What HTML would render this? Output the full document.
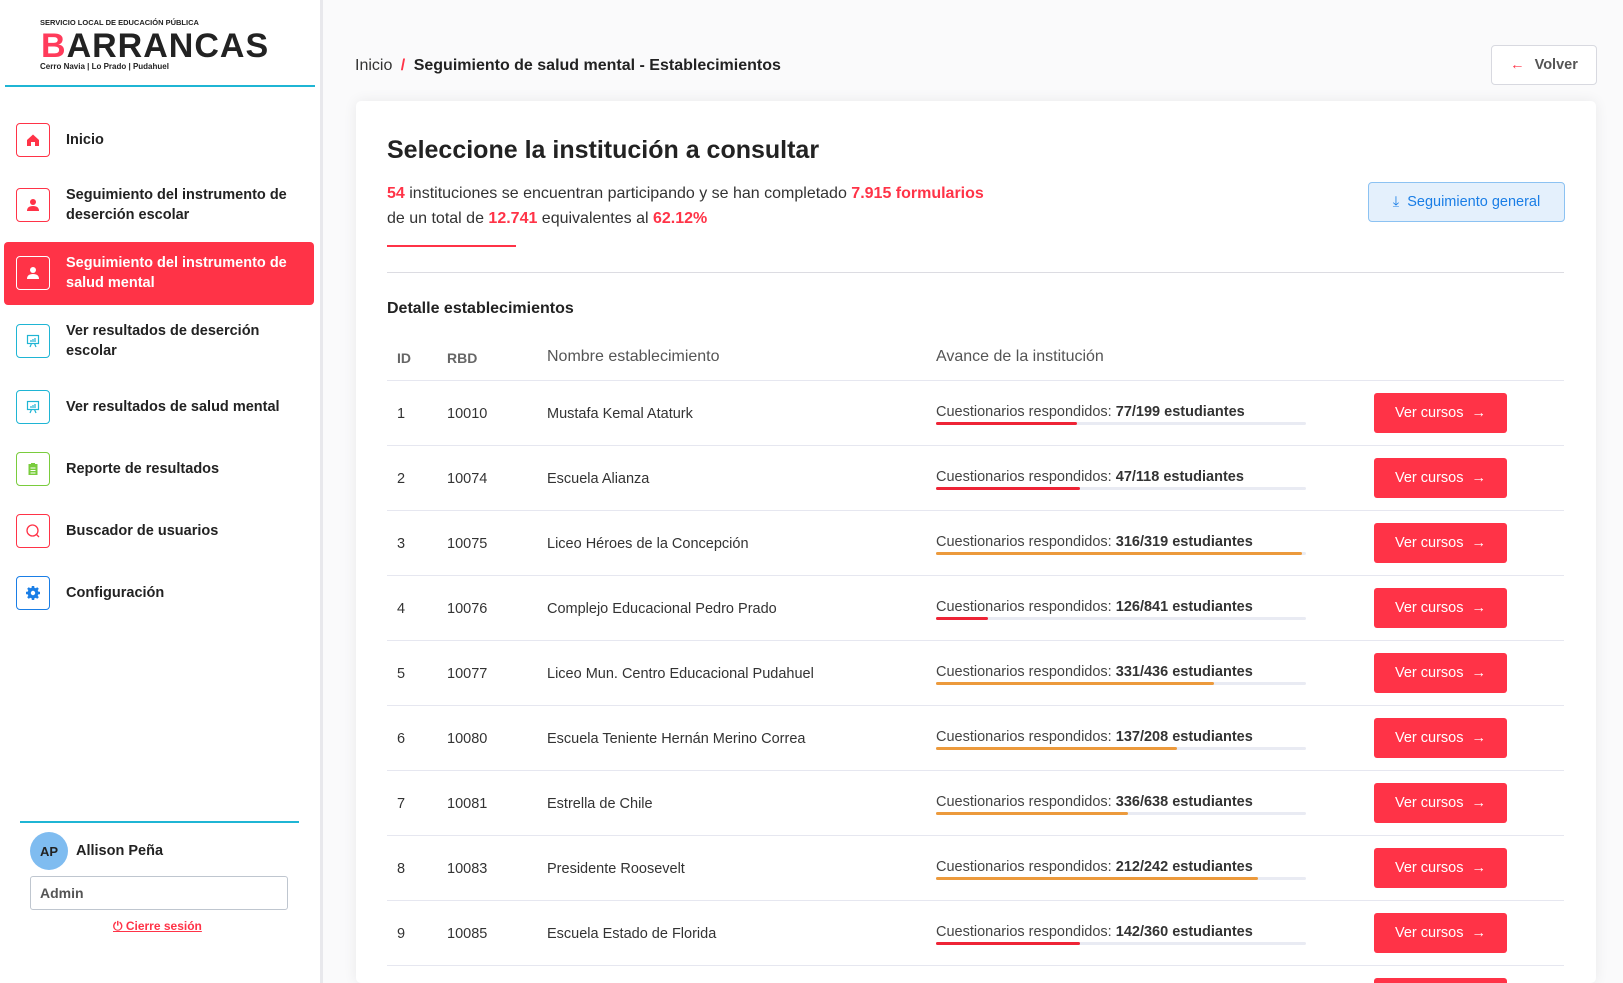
<!DOCTYPE html>
<html><head><meta charset="utf-8"><style>
*{box-sizing:border-box;margin:0;padding:0}
html,body{width:1623px;height:983px;overflow:hidden}
body{background:#fafafb;font-family:"Liberation Sans",sans-serif;color:#222;position:relative}
#w{position:absolute;left:0;top:0;width:1623px;height:983px;overflow:hidden}
.sb{position:absolute;left:0;top:0;width:323px;height:983px;background:#fff;border-right:3px solid #e8e8ec}
.abs{position:absolute}
.mi{position:absolute;left:16px;width:34px;height:34px;border:1.5px solid;border-radius:4px;display:flex;align-items:center;justify-content:center}
.mt{position:absolute;left:66px;font-size:14.5px;font-weight:bold;line-height:20px;color:#222}
.card{position:absolute;left:356px;top:101px;width:1240px;height:882px;background:#fff;border-radius:5px;box-shadow:0 0 14px rgba(0,0,0,.07)}
.r{color:#ff3347;font-weight:bold}
.row{position:absolute;left:387px;width:1177px;height:65px;border-top:1px solid #e6e7f0;font-size:14.5px;color:#333}
.row span{position:absolute;top:25px}
.pt{position:absolute;left:549px;top:23px;font-size:14.5px;color:#444;white-space:nowrap}
.pt b{color:#333}
.bar{position:absolute;left:549px;top:41px;width:370px;height:3px;background:#e9ebf3;border-radius:2px}
.bar i{display:block;height:3px;border-radius:2px}
.btn{position:absolute;left:987px;top:12px;width:133px;height:40px;background:#ff3347;border-radius:3px;color:#fff;font-size:14.5px;display:flex;align-items:center;justify-content:center}
</style></head><body><div id="w">
<div class="sb">
 <div class="abs" style="left:40px;top:18px;font-size:7.5px;font-weight:bold;color:#222">SERVICIO LOCAL DE EDUCACIÓN PÚBLICA</div>
 <div class="abs" style="left:41px;top:27px;font-size:34px;font-weight:900;letter-spacing:1px;color:#222;line-height:38px"><span style="color:#ff3b5b">B</span>ARRANCAS</div>
 <div class="abs" style="left:40px;top:62px;font-size:8px;font-weight:bold;color:#222">Cerro Navia | Lo Prado | Pudahuel</div>
 <div class="abs" style="left:5px;top:85px;width:310px;height:1.5px;background:#1fb5d4"></div>

 <div class="mi" style="top:123px;border-color:#ff3347"><svg width="14" height="14" viewBox="0 0 14 14"><path d="M1 7L7 1.5 13 7V13H9V9H5V13H1Z" fill="#ff3347"/></svg></div>
 <div class="mt" style="top:130px">Inicio</div>
 <div class="mi" style="top:188px;border-color:#ff3347"><svg width="14" height="14" viewBox="0 0 14 14"><circle cx="7" cy="4" r="3" fill="#ff3347"/><path d="M1 13Q1 8 7 8Q13 8 13 13Z" fill="#ff3347"/></svg></div>
 <div class="mt" style="top:185px">Seguimiento del instrumento de<br>deserción escolar</div>
 <div class="abs" style="left:4px;top:242px;width:310px;height:63px;background:#ff3347;border-radius:4px"></div>
 <div class="mi" style="top:256px;border-color:#fff"><svg width="14" height="14" viewBox="0 0 14 14"><circle cx="7" cy="4" r="3" fill="#fff"/><path d="M1 13Q1 8 7 8Q13 8 13 13Z" fill="#fff"/></svg></div>
 <div class="mt" style="top:253px;color:#fff">Seguimiento del instrumento de<br>salud mental</div>
 <div class="mi" style="top:324px;border-color:#1fb5d4"><svg width="14" height="14" viewBox="0 0 14 14" fill="none" stroke="#1fb5d4" stroke-width="1.2"><rect x="1.5" y="1.5" width="11" height="8"/><path d="M5 8V6M7 8V5M9 8V4M4 13L5.5 9.5M10 13L8.5 9.5"/></svg></div>
 <div class="mt" style="top:321px">Ver resultados de deserción<br>escolar</div>
 <div class="mi" style="top:390px;border-color:#1fb5d4"><svg width="14" height="14" viewBox="0 0 14 14" fill="none" stroke="#1fb5d4" stroke-width="1.2"><rect x="1.5" y="1.5" width="11" height="8"/><path d="M5 8V6M7 8V5M9 8V4M4 13L5.5 9.5M10 13L8.5 9.5"/></svg></div>
 <div class="mt" style="top:397px">Ver resultados de salud mental</div>
 <div class="mi" style="top:452px;border-color:#7acc3d"><svg width="14" height="14" viewBox="0 0 14 14"><rect x="2.5" y="2" width="9" height="11" fill="#7acc3d"/><rect x="5" y="1" width="4" height="2" fill="#7acc3d"/><path d="M4.5 6H9.5M4.5 8.5H9.5M4.5 11H9.5" stroke="#fff" stroke-width="1"/></svg></div>
 <div class="mt" style="top:459px">Reporte de resultados</div>
 <div class="mi" style="top:514px;border-color:#ff3347"><svg width="16" height="16" viewBox="0 0 16 16" fill="none" stroke="#ff3347" stroke-width="1.3"><circle cx="7.5" cy="7.5" r="5.5"/><path d="M11.5 11.5L14 14"/></svg></div>
 <div class="mt" style="top:521px">Buscador de usuarios</div>
 <div class="mi" style="top:576px;border-color:#1a7ee6"><svg width="16" height="16" viewBox="0 0 16 16"><circle cx="8" cy="8" r="5.5" fill="#1a7ee6"/><path d="M8 1V15M1 8H15M3 3L13 13M13 3L3 13" stroke="#1a7ee6" stroke-width="2.5"/><circle cx="8" cy="8" r="2.2" fill="#fff"/></svg></div>
 <div class="mt" style="top:583px">Configuración</div>

 <div class="abs" style="left:20px;top:821px;width:279px;height:1.5px;background:#1fb5d4"></div>
 <div class="abs" style="left:30px;top:832px;width:38px;height:38px;border-radius:50%;background:#7fbcf0;font-size:13px;font-weight:bold;display:flex;align-items:center;justify-content:center;color:#222">AP</div>
 <div class="abs" style="left:76px;top:843px;font-size:14.5px;font-weight:bold">Allison Peña</div>
 <div class="abs" style="left:30px;top:876px;width:258px;height:34px;border:1px solid #bfc6cf;border-radius:3px;padding:8px 9px;font-size:14px;font-weight:bold;color:#555">Admin</div>
 <div class="abs" style="left:113px;top:919px;font-size:12px;font-weight:bold;color:#ff3347;text-decoration:underline">⏻ Cierre sesión</div>
</div>

<div class="abs" style="left:355px;top:57px;font-size:16px;color:#333">Inicio <span class="r" style="margin:0 4px">/</span> <b style="color:#222">Seguimiento de salud mental - Establecimientos</b></div>
<div class="abs" style="left:1491px;top:45px;width:106px;height:40px;border:1px solid #d8d9e0;border-radius:4px;background:#fff;font-size:14.5px;font-weight:bold;color:#555;display:flex;align-items:center;justify-content:center"><span style="color:#ff3347;font-weight:normal;margin-right:10px">←</span>Volver</div>

<div class="card"></div>
<div class="abs" style="left:387px;top:136px;font-size:25px;font-weight:bold;color:#222">Seleccione la institución a consultar</div>
<div class="abs" style="left:387px;top:182px;font-size:16px;line-height:24.5px;color:#333"><span class="r">54</span> instituciones se encuentran participando y se han completado <span class="r">7.915 formularios</span><br>de un total de <span class="r">12.741</span> equivalentes al <span class="r">62.12%</span></div>
<div class="abs" style="left:387px;top:245px;width:129px;height:2px;background:#ff3347"></div>
<div class="abs" style="left:1368px;top:182px;width:197px;height:40px;background:#e4f0fc;border:1px solid #8cc2f2;border-radius:4px;color:#1a7ee6;font-size:14.5px;display:flex;align-items:center;justify-content:center">⤓&nbsp; Seguimiento general</div>
<div class="abs" style="left:387px;top:272px;width:1177px;height:1px;background:#dcdce2"></div>
<div class="abs" style="left:387px;top:300px;font-size:16px;font-weight:bold;color:#222">Detalle establecimientos</div>
<div class="abs" style="left:397px;top:350px;font-size:14px;font-weight:bold;color:#666">ID</div>
<div class="abs" style="left:447px;top:350px;font-size:14px;font-weight:bold;color:#666">RBD</div>
<div class="abs" style="left:547px;top:348px;font-size:16px;color:#555">Nombre establecimiento</div>
<div class="abs" style="left:936px;top:348px;font-size:16px;color:#555">Avance de la institución</div>

<div class="row" style="top:380px"><span style="left:10px">1</span><span style="left:60px">10010</span><span style="left:160px">Mustafa Kemal Ataturk</span><div class="pt">Cuestionarios respondidos: <b>77/199 estudiantes</b></div><div class="bar"><i style="width:38%;background:#ee2436"></i></div><div class="btn">Ver cursos &nbsp;→</div></div>
<div class="row" style="top:445px"><span style="left:10px">2</span><span style="left:60px">10074</span><span style="left:160px">Escuela Alianza</span><div class="pt">Cuestionarios respondidos: <b>47/118 estudiantes</b></div><div class="bar"><i style="width:39%;background:#ee2436"></i></div><div class="btn">Ver cursos &nbsp;→</div></div>
<div class="row" style="top:510px"><span style="left:10px">3</span><span style="left:60px">10075</span><span style="left:160px">Liceo Héroes de la Concepción</span><div class="pt">Cuestionarios respondidos: <b>316/319 estudiantes</b></div><div class="bar"><i style="width:99%;background:#ec9a3c"></i></div><div class="btn">Ver cursos &nbsp;→</div></div>
<div class="row" style="top:575px"><span style="left:10px">4</span><span style="left:60px">10076</span><span style="left:160px">Complejo Educacional Pedro Prado</span><div class="pt">Cuestionarios respondidos: <b>126/841 estudiantes</b></div><div class="bar"><i style="width:14%;background:#ee2436"></i></div><div class="btn">Ver cursos &nbsp;→</div></div>
<div class="row" style="top:640px"><span style="left:10px">5</span><span style="left:60px">10077</span><span style="left:160px">Liceo Mun. Centro Educacional Pudahuel</span><div class="pt">Cuestionarios respondidos: <b>331/436 estudiantes</b></div><div class="bar"><i style="width:75%;background:#ec9a3c"></i></div><div class="btn">Ver cursos &nbsp;→</div></div>
<div class="row" style="top:705px"><span style="left:10px">6</span><span style="left:60px">10080</span><span style="left:160px">Escuela Teniente Hernán Merino Correa</span><div class="pt">Cuestionarios respondidos: <b>137/208 estudiantes</b></div><div class="bar"><i style="width:65%;background:#ec9a3c"></i></div><div class="btn">Ver cursos &nbsp;→</div></div>
<div class="row" style="top:770px"><span style="left:10px">7</span><span style="left:60px">10081</span><span style="left:160px">Estrella de Chile</span><div class="pt">Cuestionarios respondidos: <b>336/638 estudiantes</b></div><div class="bar"><i style="width:52%;background:#ec9a3c"></i></div><div class="btn">Ver cursos &nbsp;→</div></div>
<div class="row" style="top:835px"><span style="left:10px">8</span><span style="left:60px">10083</span><span style="left:160px">Presidente Roosevelt</span><div class="pt">Cuestionarios respondidos: <b>212/242 estudiantes</b></div><div class="bar"><i style="width:87%;background:#ec9a3c"></i></div><div class="btn">Ver cursos &nbsp;→</div></div>
<div class="row" style="top:900px"><span style="left:10px">9</span><span style="left:60px">10085</span><span style="left:160px">Escuela Estado de Florida</span><div class="pt">Cuestionarios respondidos: <b>142/360 estudiantes</b></div><div class="bar"><i style="width:39%;background:#ee2436"></i></div><div class="btn">Ver cursos &nbsp;→</div></div>
<div class="row" style="top:965px;height:18px;overflow:hidden"><div class="btn">Ver cursos &nbsp;→</div></div>
</div></body></html>
